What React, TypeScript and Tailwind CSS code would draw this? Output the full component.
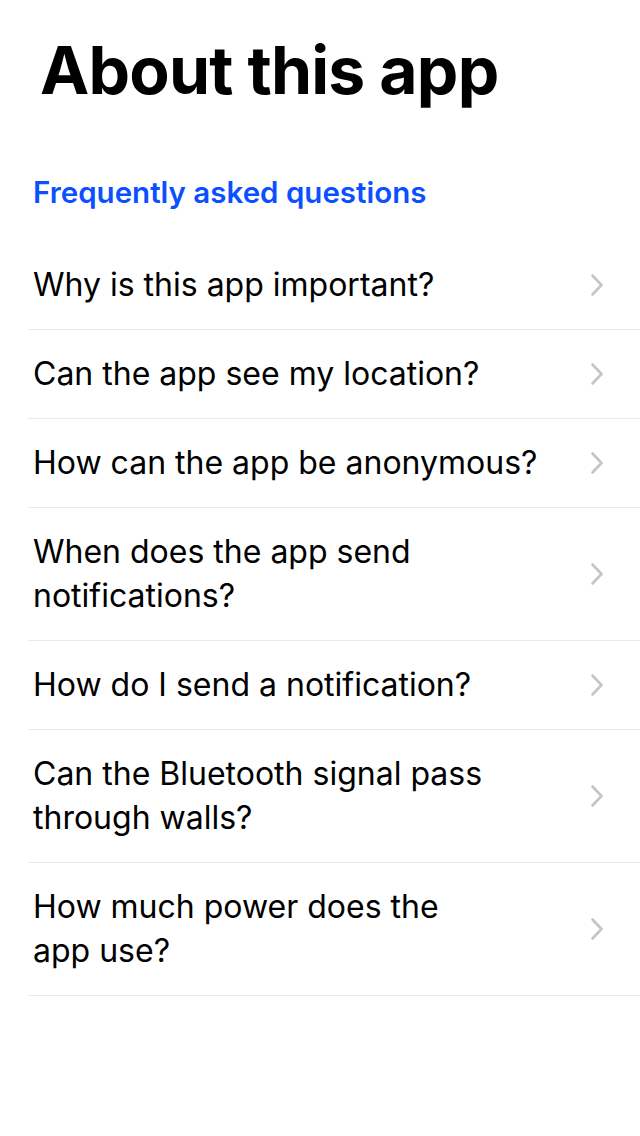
const questions = [
  ["Why is this app important?"],
  ["Can the app see my location?"],
  ["How can the app be anonymous?"],
  ["When does the app send", "notifications?"],
  ["How do I send a notification?"],
  ["Can the Bluetooth signal pass", "through walls?"],
  ["How much power does the", "app use?"],
];

function Chevron() {
  return (
    <svg width="14" height="24" viewBox="0 0 14 24" fill="none" aria-hidden>
      <path d="M2.5 2.5 L11.5 12 L2.5 21.5" stroke="#c5c5c8" strokeWidth="2.6" strokeLinecap="round" strokeLinejoin="round" />
    </svg>
  );
}

export default function App() {
  return (
    <div className="min-h-[1136px] w-[640px] bg-white font-['Inter','Liberation_Sans',sans-serif] text-black">
      <h1 className="pl-[40px] pt-[28px] text-[66px] font-bold leading-[84px] tracking-[-0.8px]">About this app</h1>
      <h2 className="mt-[63px] pl-[33px] text-[29.5px] font-semibold leading-[34px] text-[#0a50ff]">
        Frequently asked questions
      </h2>
      <ul className="ml-[28px] mt-[32px]">
        {questions.map((lines) => (
          <li key={lines.join(" ")} className="flex items-center border-b border-[#e9e9ec] py-[22px]">
            <span className="flex w-[508px] flex-col pl-[5px] text-[32px] leading-[44px]">
              {lines.map((l) => (
                <span key={l} className="whitespace-nowrap">
                  {l}
                </span>
              ))}
            </span>
            <span className="ml-[54px] flex">
              <Chevron />
            </span>
          </li>
        ))}
      </ul>
    </div>
  );
}
